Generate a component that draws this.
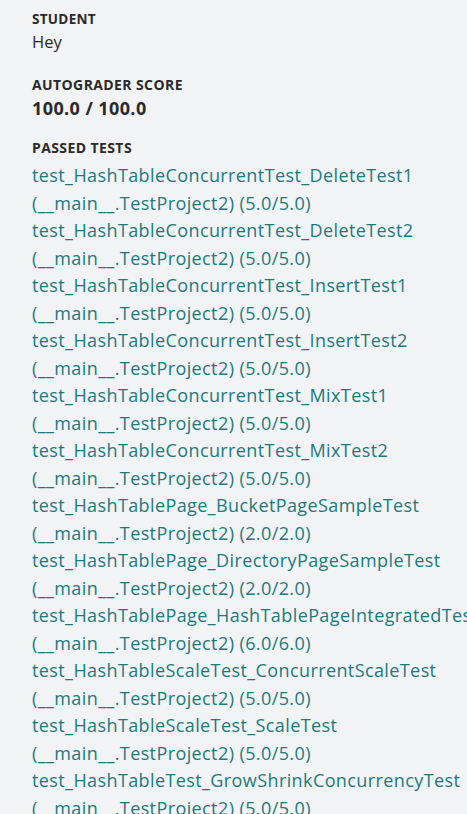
import React from 'react';

const tests = [
  ['test_HashTableConcurrentTest_DeleteTest1', '5.0/5.0'],
  ['test_HashTableConcurrentTest_DeleteTest2', '5.0/5.0'],
  ['test_HashTableConcurrentTest_InsertTest1', '5.0/5.0'],
  ['test_HashTableConcurrentTest_InsertTest2', '5.0/5.0'],
  ['test_HashTableConcurrentTest_MixTest1', '5.0/5.0'],
  ['test_HashTableConcurrentTest_MixTest2', '5.0/5.0'],
  ['test_HashTablePage_BucketPageSampleTest', '2.0/2.0'],
  ['test_HashTablePage_DirectoryPageSampleTest', '2.0/2.0'],
  ['test_HashTablePage_HashTablePageIntegratedTest', '6.0/6.0'],
  ['test_HashTableScaleTest_ConcurrentScaleTest', '5.0/5.0'],
  ['test_HashTableScaleTest_ScaleTest', '5.0/5.0'],
  ['test_HashTableTest_GrowShrinkConcurrencyTest', '5.0/5.0'],
];

const App = () => {
  return (
    <div
      className="h-[814px] w-[467px] overflow-hidden bg-[#f2f3f5] pl-[32px] pt-[10px] text-[#2a2a2a]"
      style={{ fontFamily: '"Open Sans", Lato, sans-serif' }}
    >
      {/* Student */}
      <div>
        <div className="text-[13.5px] font-bold uppercase leading-[18px] tracking-[0.3px]">Student</div>
        <div className="text-[16.5px] leading-[28px]">Hey</div>
      </div>

      {/* Score */}
      <div className="mt-[20px]">
        <div className="text-[14px] font-bold uppercase leading-[18px] tracking-[0.4px]">Autograder Score</div>
        <div className="text-[18px] font-bold leading-[28px] tracking-[0.4px]">100.0 / 100.0</div>
      </div>

      {/* Passed tests */}
      <div className="mt-[17px]">
        <div className="text-[14px] font-bold uppercase leading-[18px] tracking-[0.4px]">Passed Tests</div>
        <ul className="mt-[5px] text-[18px] leading-[27.5px] tracking-[0.4px] text-[#1b7a7e]">
          {tests.map(([name, score]) => (
            <li key={name} className="whitespace-nowrap">
              <div>{name}</div>
              <div>(__main__.TestProject2) ({score})</div>
            </li>
          ))}
        </ul>
      </div>
    </div>
  );
};

export default App;
